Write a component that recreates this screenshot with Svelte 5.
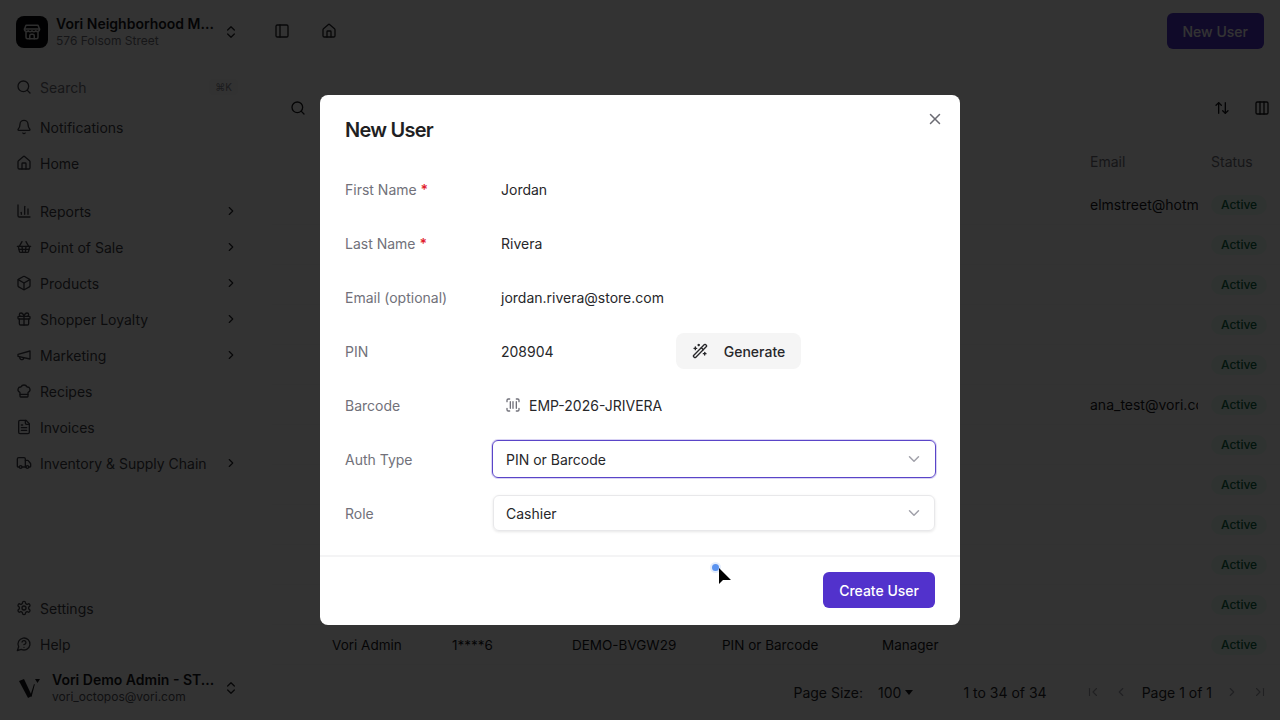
<script>
  const icons = {
    store: '<path d="M4 3h16l2 5v1a3 3 0 0 1-5 1.5 3.5 3.5 0 0 1-5 0 3.5 3.5 0 0 1-5 0A3 3 0 0 1 2 9V8z"/><path d="M2 8h20"/><path d="M4 12v7a2 2 0 0 0 2 2h12a2 2 0 0 0 2-2v-7"/><path d="M9 21v-4a2 2 0 0 1 2-2h2a2 2 0 0 1 2 2v4"/>',
    updown: '<path d="m7 15 5 5 5-5"/><path d="m7 9 5-5 5 5"/>',
    panel: '<rect x="3" y="3" width="18" height="18" rx="2"/><path d="M9 3v18"/>',
    search: '<circle cx="11" cy="11" r="8"/><path d="m21 21-4.3-4.3"/>',
    bell: '<path d="M10.268 21a2 2 0 0 0 3.464 0"/><path d="M3.262 15.326A1 1 0 0 0 4 17h16a1 1 0 0 0 .74-1.673C19.41 13.956 18 12.499 18 8A6 6 0 0 0 6 8c0 4.499-1.411 5.956-2.738 7.326"/>',
    home: '<path d="M15 21v-8a1 1 0 0 0-1-1h-4a1 1 0 0 0-1 1v8"/><path d="M3 10a2 2 0 0 1 .709-1.528l7-5.999a2 2 0 0 1 2.582 0l7 5.999A2 2 0 0 1 21 10v9a2 2 0 0 1-2 2H5a2 2 0 0 1-2-2z"/>',
    chart: '<path d="M3 3v16a2 2 0 0 0 2 2h16"/><path d="M18 17V9"/><path d="M13 17V5"/><path d="M8 17v-3"/>',
    basket: '<path d="m15 11-1 9"/><path d="m19 11-4-7"/><path d="M2 11h20"/><path d="m3.5 11 1.6 7.4a2 2 0 0 0 2 1.6h9.8a2 2 0 0 0 2-1.6l1.7-7.4"/><path d="M4.5 15.5h15"/><path d="m5 11 4-7"/><path d="m9 11 1 9"/>',
    box: '<path d="M21 8a2 2 0 0 0-1-1.73l-7-4a2 2 0 0 0-2 0l-7 4A2 2 0 0 0 3 8v8a2 2 0 0 0 1 1.73l7 4a2 2 0 0 0 2 0l7-4A2 2 0 0 0 21 16Z"/><path d="m3.3 7 8.7 5 8.7-5"/><path d="M12 22V12"/>',
    gift: '<rect x="3" y="8" width="18" height="4" rx="1"/><path d="M12 8v13"/><path d="M19 12v7a2 2 0 0 1-2 2H7a2 2 0 0 1-2-2v-7"/><path d="M7.5 8a2.5 2.5 0 0 1 0-5A4.8 8 0 0 1 12 8a4.8 8 0 0 1 4.5-5 2.5 2.5 0 0 1 0 5"/>',
    megaphone: '<path d="m3 11 18-5v12L3 14z"/><path d="M11.6 16.8a3 3 0 1 1-5.8-1.6"/>',
    chef: '<path d="M17 21a1 1 0 0 0 1-1v-5.35c0-.457.316-.844.727-1.041a4 4 0 0 0-2.134-7.589 5 5 0 0 0-9.186 0 4 4 0 0 0-2.134 7.588c.411.198.727.585.727 1.041V20a1 1 0 0 0 1 1Z"/><path d="M6 17h12"/>',
    file: '<path d="M15 2H6a2 2 0 0 0-2 2v16a2 2 0 0 0 2 2h12a2 2 0 0 0 2-2V7Z"/><path d="M14 2v4a2 2 0 0 0 2 2h4"/><path d="M10 9H8"/><path d="M16 13H8"/><path d="M16 17H8"/>',
    truck: '<path d="M14 18V6a2 2 0 0 0-2-2H4a2 2 0 0 0-2 2v11a1 1 0 0 0 1 1h2"/><path d="M15 18H9"/><path d="M19 18h2a1 1 0 0 0 1-1v-3.65a1 1 0 0 0-.22-.624l-3.48-4.35A1 1 0 0 0 17.52 8H14"/><circle cx="17" cy="18" r="2"/><circle cx="7" cy="18" r="2"/>',
    gear: '<path d="M12.22 2h-.44a2 2 0 0 0-2 2v.18a2 2 0 0 1-1 1.73l-.43.25a2 2 0 0 1-2 0l-.15-.08a2 2 0 0 0-2.73.73l-.22.38a2 2 0 0 0 .73 2.73l.15.1a2 2 0 0 1 1 1.72v.51a2 2 0 0 1-1 1.74l-.15.09a2 2 0 0 0-.73 2.73l.22.38a2 2 0 0 0 2.73.73l.15-.08a2 2 0 0 1 2 0l.43.25a2 2 0 0 1 1 1.73V20a2 2 0 0 0 2 2h.44a2 2 0 0 0 2-2v-.18a2 2 0 0 1 1-1.73l.43-.25a2 2 0 0 1 2 0l.15.08a2 2 0 0 0 2.73-.73l.22-.39a2 2 0 0 0-.73-2.73l-.15-.08a2 2 0 0 1-1-1.74v-.5a2 2 0 0 1 1-1.74l.15-.09a2 2 0 0 0 .73-2.73l-.22-.38a2 2 0 0 0-2.73-.73l-.15.08a2 2 0 0 1-2 0l-.43-.25a2 2 0 0 1-1-1.73V4a2 2 0 0 0-2-2z"/><circle cx="12" cy="12" r="3"/>',
    help: '<path d="M7.9 20A9 9 0 1 0 4 16.1L2 22Z"/><path d="M9.09 9a3 3 0 0 1 5.83 1c0 2-3 3-3 3"/><path d="M12 17h.01"/>',
    wand: '<path d="m21.64 3.64-1.28-1.28a1.21 1.21 0 0 0-1.72 0L2.36 18.64a1.21 1.21 0 0 0 0 1.72l1.28 1.28a1.2 1.2 0 0 0 1.72 0L21.64 5.36a1.2 1.2 0 0 0 0-1.72"/><path d="m14 7 3 3"/><path d="M5 6v4"/><path d="M19 14v4"/><path d="M10 2v2"/><path d="M7 8H3"/><path d="M21 16h-4"/><path d="M11 3H9"/>',
    barcode: '<path d="M3 7V5a2 2 0 0 1 2-2h2"/><path d="M17 3h2a2 2 0 0 1 2 2v2"/><path d="M21 17v2a2 2 0 0 1-2 2h-2"/><path d="M7 21H5a2 2 0 0 1-2-2v-2"/><path d="M8 7v10"/><path d="M12 7v10"/><path d="M17 7v10"/>',
    down: '<path d="m6 9 6 6 6-6"/>',
    right: '<path d="m9 18 6-6-6-6"/>',
    left: '<path d="m15 18-6-6 6-6"/>',
    close: '<path d="M18 6 6 18"/><path d="m6 6 12 12"/>',
    sort: '<path d="m21 16-4 4-4-4"/><path d="M17 20V4"/><path d="m3 8 4-4 4 4"/><path d="M7 4v16"/>',
    columns: '<rect x="3" y="3" width="18" height="18" rx="2"/><path d="M9 3v18"/><path d="M15 3v18"/>',
    first: '<path d="M6 6v12"/><path d="m18 18-6-6 6-6"/>',
    last: '<path d="M18 6v12"/><path d="m6 18 6-6-6-6"/>'
  };

  const topNav = [
    { label: 'Notifications', icon: 'bell' },
    { label: 'Home', icon: 'home' }
  ];
  const mainNav = [
    { label: 'Reports', icon: 'chart', more: true },
    { label: 'Point of Sale', icon: 'basket', more: true },
    { label: 'Products', icon: 'box', more: true },
    { label: 'Shopper Loyalty', icon: 'gift', more: true },
    { label: 'Marketing', icon: 'megaphone', more: true },
    { label: 'Recipes', icon: 'chef' },
    { label: 'Invoices', icon: 'file' },
    { label: 'Inventory & Supply Chain', icon: 'truck', more: true }
  ];
  const bottomNav = [
    { label: 'Settings', icon: 'gear' },
    { label: 'Help', icon: 'help' }
  ];

  const rows = [
    { email: 'elmstreet@hotmail.com' }, {}, {}, {}, {},
    { email: 'ana_test@vori.com' }, {}, {}, {}, {}, {},
    { name: 'Vori Admin', pin: '1****6', code: 'DEMO-BVGW29', auth: 'PIN or Barcode', role: 'Manager' }
  ];
</script>

{#snippet icon(name, size = 16)}
  <svg class="icon" width={size} height={size} viewBox="0 0 24 24" fill="none" stroke="currentColor" stroke-width="2" stroke-linecap="round" stroke-linejoin="round">{@html icons[name]}</svg>
{/snippet}

{#snippet navItem(item)}
  <div class="nav-item">
    {@render icon(item.icon)}
    <span class="nav-label">{item.label}</span>
    {#if item.more}<span class="nav-more">{@render icon('right', 14)}</span>{/if}
  </div>
{/snippet}

<div class="app">
  <aside class="sidebar">
    <div class="store">
      <div class="store-logo">{@render icon('store', 18)}</div>
      <div class="store-text">
        <div class="store-name">Vori Neighborhood M...</div>
        <div class="store-addr">576 Folsom Street</div>
      </div>
      <span class="updown">{@render icon('updown', 16)}</span>
    </div>

    <div class="nav-item search-item">
      {@render icon('search')}
      <span class="nav-label muted">Search</span>
      <span class="kbd">⌘K</span>
    </div>

    <nav class="nav-group">
      {#each topNav as item}{@render navItem(item)}{/each}
    </nav>
    <nav class="nav-group main-group">
      {#each mainNav as item}{@render navItem(item)}{/each}
    </nav>

    <nav class="nav-group bottom-group">
      {#each bottomNav as item}{@render navItem(item)}{/each}
    </nav>

    <div class="account">
      <svg class="vori-logo" width="24" height="24" viewBox="0 0 24 24">
        <polygon points="3,5 8,3 16,20 12,22" fill="#18181b" />
        <polygon points="14.500,19 18,8 18.800,8.500 15.500,21" fill="#18181b" />
        <polygon points="19,3 24,3 21.500,7" fill="#18181b" />
      </svg>
      <div class="account-text">
        <div class="account-name">Vori Demo Admin - ST...</div>
        <div class="account-mail">vori_octopos@vori.com</div>
      </div>
      <span class="updown">{@render icon('updown', 16)}</span>
    </div>
  </aside>

  <main class="main">
    <header class="topbar">
      <span class="top-icon">{@render icon('panel', 16)}</span>
      <span class="top-icon">{@render icon('home', 16)}</span>
      <button class="btn-primary new-user">New User</button>
    </header>

    <div class="toolbar">
      {@render icon('search')}
      <div class="toolbar-right">
        {@render icon('sort')}
        {@render icon('columns')}
      </div>
    </div>

    <div class="table">
      <div class="tr head">
        <div class="td"></div>
        <div class="td"></div>
        <div class="td"></div>
        <div class="td"></div>
        <div class="td"></div>
        <div class="td"></div>
        <div class="td">Email</div>
        <div class="td status-cell">Status</div>
      </div>
      {#each rows as row}
        <div class="tr">
          <div class="td"></div>
          <div class="td">{row.name ?? ''}</div>
          <div class="td">{row.pin ?? ''}</div>
          <div class="td">{row.code ?? ''}</div>
          <div class="td">{row.auth ?? ''}</div>
          <div class="td">{row.role ?? ''}</div>
          <div class="td email-cell">{row.email ?? ''}</div>
          <div class="td status-cell"><span class="badge">Active</span></div>
        </div>
      {/each}
    </div>

    <footer class="pager">
      <span class="page-size">Page Size:</span>
      <span class="page-select">100<i class="caret"></i></span>
      <span class="page-count">1 to 34 of 34</span>
      <span class="page-btn first-btn">{@render icon('first', 14)}</span>
      <span class="page-btn">{@render icon('left', 14)}</span>
      <span class="page-of">Page 1 of 1</span>
      <span class="page-btn">{@render icon('right', 14)}</span>
      <span class="page-btn">{@render icon('last', 14)}</span>
    </footer>
  </main>
</div>

<div class="overlay">
  <div class="modal">
    <button class="close" aria-label="Close">{@render icon('close', 18)}</button>
    <h2 class="modal-title">New User</h2>

    <div class="form">
      <div class="field">
        <span class="label">First Name <b class="req">*</b></span>
        <span class="value">Jordan</span>
      </div>
      <div class="field">
        <span class="label">Last Name <b class="req">*</b></span>
        <span class="value">Rivera</span>
      </div>
      <div class="field">
        <span class="label">Email (optional)</span>
        <span class="value">jordan.rivera@store.com</span>
      </div>
      <div class="field">
        <span class="label">PIN</span>
        <span class="value pin">208904</span>
        <button class="generate">{@render icon('wand', 16)}<span>Generate</span></button>
      </div>
      <div class="field">
        <span class="label">Barcode</span>
        <span class="value code">
          <span class="code-icon">{@render icon('barcode', 16)}</span>
          EMP-2026-JRIVERA
        </span>
      </div>
      <div class="field">
        <span class="label">Auth Type</span>
        <div class="select focused">
          <span>PIN or Barcode</span>
          <span class="select-arrow">{@render icon('down', 18)}</span>
        </div>
      </div>
      <div class="field">
        <span class="label">Role</span>
        <div class="select">
          <span>Cashier</span>
          <span class="select-arrow">{@render icon('down', 18)}</span>
        </div>
      </div>
    </div>

    <div class="modal-footer">
      <button class="btn-primary">Create User</button>
    </div>
  </div>

  <span class="touch-dot"></span>
  <svg class="cursor" width="16" height="20" viewBox="0 0 16 20">
    <polygon points="1,1 1,17 5,13 13,13" fill="#000" />
  </svg>
</div>

<style>
  :global(body) {
    margin: 0;
    background: #fff;
    font-family: Inter, "Liberation Sans", sans-serif;
    font-size: 14px;
    color: #18181b;
  }

  .icon {
    display: block;
    flex: none;
  }

  .app {
    display: flex;
    height: 720px;
    overflow: hidden;
  }

  /* sidebar */
  .sidebar {
    width: 256px;
    flex: none;
    box-sizing: border-box;
    padding: 16px 16px 13px;
    display: flex;
    flex-direction: column;
  }

  .store {
    display: flex;
    align-items: center;
    height: 32px;
    margin-bottom: 21px;
  }

  .store-logo {
    width: 32px;
    height: 32px;
    flex: none;
    border-radius: 8px;
    background: #09090b;
    color: #e4e4e7;
    display: flex;
    align-items: center;
    justify-content: center;
    margin-right: 8px;
  }

  .store-text,
  .account-text {
    flex: 1;
    min-width: 0;
  }

  .store-name,
  .account-name {
    font-size: 14px;
    font-weight: 600;
    line-height: 18px;
    color: #18181b;
    white-space: nowrap;
  }

  .store-addr {
    font-size: 12px;
    line-height: 16px;
    color: #71717a;
    white-space: nowrap;
  }

  .updown {
    flex: none;
    color: #27272a;
    margin-right: 1px;
  }

  .nav-item {
    height: 36px;
    display: flex;
    align-items: center;
    gap: 8px;
    color: #3f3f46;
  }

  .search-item {
    margin-bottom: 4px;
  }

  .nav-label {
    flex: 1;
    white-space: nowrap;
  }

  .muted {
    color: #71717a;
  }

  .kbd {
    font-size: 10px;
    line-height: 16px;
    padding: 0 6px;
    margin-right: 2px;
    border-radius: 4px;
    background: #f9f9fa;
    color: #8a8a92;
  }

  .nav-more {
    color: #27272a;
    margin-right: 2px;
  }

  .main-group {
    margin-top: 12px;
  }

  .bottom-group {
    margin-top: auto;
  }

  .account {
    display: flex;
    align-items: center;
    height: 36px;
    margin-top: 8px;
    margin-bottom: 1px;
  }

  .vori-logo {
    flex: none;
    margin-right: 12px;
  }

  .account-mail {
    font-size: 12px;
    line-height: 16px;
    color: #52525b;
    white-space: nowrap;
  }

  /* main */
  .main {
    flex: 1;
    min-width: 0;
    display: flex;
    flex-direction: column;
  }

  .topbar {
    height: 62px;
    flex: none;
    display: flex;
    align-items: center;
    gap: 31px;
    padding: 0 16px 0 18px;
  }

  .top-icon {
    color: #27272a;
  }

  .new-user {
    margin-left: auto;
  }

  .btn-primary {
    height: 36px;
    padding: 0 16px;
    border: none;
    border-radius: 6px;
    background: #5232cc;
    color: #fff;
    font-family: inherit;
    font-size: 14px;
    font-weight: 500;
  }

  .toolbar {
    flex: none;
    height: 46px;
    margin-top: 23px;
    padding: 0 10px 0 34px;
    display: flex;
    align-items: center;
    justify-content: space-between;
    color: #18181b;
  }

  .toolbar-right {
    display: flex;
    gap: 24px;
  }

  .table {
    flex: 1;
    min-height: 0;
    margin-top: 12px;
    margin-left: 16px;
  }

  .tr {
    display: grid;
    grid-template-columns: 48px 120px 120px 150px 160px 208px 120px 1fr;
    height: 40px;
    align-items: center;
    border-bottom: 1px solid #f9f9f9;
    box-sizing: border-box;
    color: #18181b;
    font-size: 13.5px;
  }

  .tr.head {
    height: 37px;
    margin-bottom: 5px;
    color: #71717a;
    font-size: 14px;
    border-bottom: none;
  }

  .td {
    padding-left: 12px;
    overflow: hidden;
    white-space: nowrap;
  }

  .email-cell {
    font-size: 14px;
  }

  .status-cell {
    padding-left: 13px;
  }

  .badge {
    display: inline-block;
    font-size: 12px;
    font-weight: 500;
    line-height: 20px;
    padding: 0 10px;
    border-radius: 10px;
    background: #ecfdf3;
    color: #0b6b45;
  }

  .pager {
    flex: none;
    height: 56px;
    display: flex;
    align-items: center;
    justify-content: flex-end;
    color: #27272a;
  }

  .page-size {
    margin-right: 15px;
  }

  .page-select {
    display: flex;
    align-items: center;
    gap: 4px;
  }

  .caret {
    width: 0;
    height: 0;
    border-left: 4px solid transparent;
    border-right: 4px solid transparent;
    border-top: 5px solid #18181b;
  }

  .page-count {
    margin-left: 50px;
  }

  .first-btn {
    margin-left: 39px;
  }

  .page-btn {
    width: 14px;
    margin-right: 14px;
    color: #a1a1aa;
  }

  .page-btn:last-child {
    margin-right: 13px;
  }

  .page-of {
    margin-right: 13px;
  }

  /* modal */
  .overlay {
    position: fixed;
    inset: 0;
    background: rgba(0, 0, 0, 0.8);
    display: flex;
    align-items: center;
    justify-content: center;
  }

  .modal {
    position: relative;
    width: 640px;
    height: 530px;
    box-sizing: border-box;
    background: #fff;
    border-radius: 8px;
    display: flex;
    flex-direction: column;
  }

  .close {
    position: absolute;
    top: 15px;
    right: 16px;
    padding: 0;
    border: none;
    background: none;
    color: #6b6b73;
  }

  .modal-title {
    margin: 0;
    padding: 22px 25px 0;
    font-size: 20px;
    line-height: 26px;
    font-weight: 600;
    letter-spacing: -0.75px;
    color: #1f1f23;
  }

  .form {
    padding: 19px 25px 0;
    flex: 1;
  }

  .field {
    height: 54px;
    display: flex;
    align-items: center;
  }

  .label {
    width: 147px;
    flex: none;
    color: #71717a;
  }

  .req {
    color: #e11d2e;
    font-weight: 600;
  }

  .value {
    padding-left: 9px;
    color: #27272a;
  }

  .pin {
    width: 175px;
    flex: none;
  }

  .code {
    display: flex;
    align-items: center;
    gap: 8px;
    padding-left: 13px;
  }

  .code-icon {
    color: #71717a;
  }

  .generate {
    height: 36px;
    width: 125px;
    padding: 0;
    border: none;
    border-radius: 8px;
    background: #f5f5f5;
    color: #27272a;
    font-family: inherit;
    font-size: 14px;
    font-weight: 500;
    display: flex;
    align-items: center;
    justify-content: center;
    gap: 16px;
  }

  .select {
    flex: 1;
    height: 36px;
    box-sizing: border-box;
    padding: 0 11px 0 12px;
    margin-left: 1px;
    display: flex;
    align-items: center;
    justify-content: space-between;
    border: 1px solid #e8e8ea;
    border-radius: 6px;
    box-shadow: 0 1px 3px rgba(0, 0, 0, 0.1);
    color: #27272a;
  }

  .select.focused {
    height: 38px;
    margin-left: 0;
    margin-right: -1px;
    border: 1.5px solid #5a45c8;
    padding: 0 12.5px 0 13px;
    box-shadow: 0 0 0 1px #d9d3f4;
  }

  .select-arrow {
    color: #a1a1aa;
  }

  .modal-footer {
    height: 70px;
    box-sizing: border-box;
    border-top: 2px solid #f4f4f5;
    padding: 15px 25px 0;
    display: flex;
    justify-content: flex-end;
    align-items: flex-start;
  }

  /* pointer capture overlay */
  .touch-dot {
    position: absolute;
    left: 712px;
    top: 564px;
    width: 7px;
    height: 7px;
    border-radius: 50%;
    background: #5a93f0;
    box-shadow: 0 0 0 2px #e4edfc;
  }

  .cursor {
    position: absolute;
    left: 718px;
    top: 567px;
  }
</style>
